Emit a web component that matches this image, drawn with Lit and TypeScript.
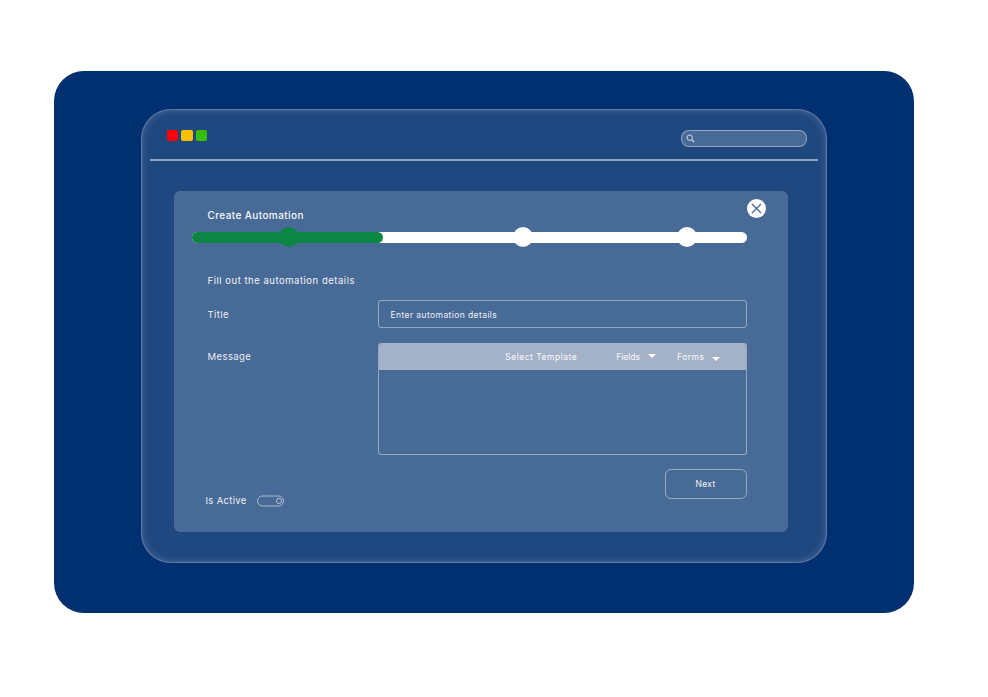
import { LitElement, html, css } from "lit";
import { customElement } from "lit/decorators.js";

@customElement("app-root")
export class AppRoot extends LitElement {
  static styles = css`
    :host {
      display: block;
      height: 697px;
      background: #fff;
      font-family: Inter, "Open Sans", sans-serif;
      color: #e9eef5;
      box-sizing: border-box;
      padding: 71px 0 0 54px;
    }
    * { box-sizing: border-box; }
    .stage {
      width: 860px;
      height: 542px;
      background: #003070;
      border-radius: 30px;
      padding: 38px 87px 0;
    }
    .window {
      width: 686px;
      height: 454px;
      background: #204880;
      border-radius: 30px;
      border: 1.5px solid rgba(255, 255, 255, 0.28);
      box-shadow: inset 0 0 7px rgba(255, 255, 255, 0.2);
      padding: 19px 8.5px 0 7.5px;
    }
    .topbar {
      display: flex;
      justify-content: space-between;
      height: 30px;
      padding: 0 11px 0 17px;
    }
    .lights { display: flex; gap: 3px; margin-top: 0.5px; }
    .light { width: 11.5px; height: 11.5px; border-radius: 2px; }
    .red { background: #ff0000; }
    .yellow { background: #ffc000; }
    .green { background: #38c000; }
    .search {
      width: 126px;
      height: 16.5px;
      margin-top: 1px;
      border-radius: 8px;
      background: #486a97;
      border: 1px solid rgba(255, 255, 255, 0.4);
      display: flex;
      align-items: center;
      padding-left: 4px;
    }
    .search svg { display: block; }
    .divider {
      height: 2px;
      background: #93a6c2;
      margin-top: -0.5px;
    }
    .panel {
      position: relative;
      width: 614px;
      height: 341px;
      margin: 30px 0 0 24px;
      background: #486a97;
      border-radius: 6px;
      padding: 17px 41px 0 18px;
    }
    .close {
      position: absolute;
      top: 8px;
      right: 22px;
      width: 19px;
      height: 19px;
    }
    .close svg { display: block; }
    h1 {
      margin: 0 0 0 16px;
      font-size: 10px;
      line-height: 14px;
      font-weight: 500;
      letter-spacing: 0.4px;
      color: #f6f8fb;
    }
    .track {
      position: relative;
      height: 10.5px;
      margin-top: 10.5px;
      background: #fff;
      border-radius: 6px;
    }
    .fill {
      height: 100%;
      width: 191px;
      background: #0d8645;
      border-radius: 6px;
    }
    .knob {
      position: absolute;
      top: -4.75px;
      width: 20px;
      height: 20px;
      margin-left: -10px;
      border-radius: 50%;
      background: #fff;
    }
    .knob.on { background: #0d8645; }
    .form {
      display: grid;
      grid-template-columns: 170px 369px;
      padding-left: 16px;
      row-gap: 15px;
      margin-top: 12px;
    }
    .intro {
      margin: 31px 0 0 16px;
      font-size: 9.5px;
      line-height: 14px;
      letter-spacing: 0.52px;
      color: #f0f3f8;
    }
    .label {
      font-size: 9.5px;
      line-height: 14px;
      letter-spacing: 0.42px;
      color: #e8edf4;
      align-self: center;
      padding-top: 2px;
    }
    .label.top { align-self: start; margin-top: 5px; }
    .input {
      height: 28px;
      border: 1px solid rgba(255, 255, 255, 0.42);
      border-radius: 3px;
      display: flex;
      align-items: center;
      padding: 2px 0 0 12px;
      font-size: 8.5px;
      letter-spacing: 0.41px;
      color: #eef1f6;
    }
    .editor {
      height: 112px;
      border: 1px solid rgba(255, 255, 255, 0.42);
      border-top: 0;
      border-radius: 3px;
      overflow: hidden;
    }
    .toolbar {
      height: 27px;
      background: #a4b2c8;
      display: flex;
      align-items: center;
      justify-content: flex-end;
      padding: 2px 26px 0 0;
      font-size: 8.5px;
      letter-spacing: 0.48px;
      color: #f6f8fb;
    }
    .tpl { margin-right: 39px; letter-spacing: 0.51px; }
    .fields-label { letter-spacing: 0; }
    .caret {
      width: 0;
      height: 0;
      border-left: 4.5px solid transparent;
      border-right: 4.5px solid transparent;
      border-top: 4.5px solid #fff;
      margin: 0 0 2px 8px;
    }
    .caret.fields { margin-right: 21px; }
    .caret.forms { margin: 4px 0 0 7px; }
    .footer {
      display: flex;
      justify-content: space-between;
      align-items: flex-start;
      margin-top: 14px;
      padding-left: 14px;
    }
    .active {
      display: flex;
      align-items: center;
      gap: 10px;
      margin-top: 25px;
      font-size: 9.5px;
      line-height: 14px;
      letter-spacing: 0.3px;
      color: #eef1f6;
    }
    .active svg { display: block; }
    .next {
      width: 82px;
      height: 30px;
      border: 1px solid rgba(255, 255, 255, 0.42);
      border-radius: 6px;
      background: transparent;
      color: #f3f5f9;
      font: inherit;
      font-size: 8.5px;
      letter-spacing: 0.35px;
      padding: 1px 0 0;
    }
  `;

  render() {
    return html`
      <div class="stage">
        <div class="window">
          <div class="topbar">
            <div class="lights">
              <div class="light red"></div>
              <div class="light yellow"></div>
              <div class="light green"></div>
            </div>
            <div class="search">
              <svg width="9" height="9" viewBox="0 0 9 9" fill="none" stroke="#dfe6ef" stroke-width="0.9">
                <circle cx="3.7" cy="3.7" r="2.7"></circle>
                <path d="M5.8 5.8 8.2 8.2" stroke-width="1.2"></path>
              </svg>
            </div>
          </div>
          <div class="divider"></div>
          <div class="panel">
            <div class="close">
              <svg width="19" height="19" viewBox="0 0 19 19">
                <circle cx="9.5" cy="9.5" r="9.5" fill="#fff"></circle>
                <path d="M5 5 14 14M14 5 5 14" stroke="#486a97" stroke-width="1.4" fill="none"></path>
              </svg>
            </div>
            <h1>Create Automation</h1>
            <div class="track">
              <div class="fill"></div>
              <div class="knob on" style="left:97px"></div>
              <div class="knob" style="left:331px"></div>
              <div class="knob" style="left:495px"></div>
            </div>
            <div class="intro">Fill out the automation details</div>
            <div class="form">
              <div class="label">Title</div>
              <div class="input">Enter automation details</div>
              <div class="label top">Message</div>
              <div class="editor">
                <div class="toolbar">
                  <span class="tpl">Select Template</span>
                  <span class="fields-label">Fields</span><span class="caret fields"></span>
                  <span>Forms</span><span class="caret forms"></span>
                </div>
              </div>
            </div>
            <div class="footer">
              <div class="active">
                <span>Is Active</span>
                <svg width="27" height="12" viewBox="0 0 27 12" fill="none" stroke="#c3cede" stroke-width="0.8">
                  <rect x="0.5" y="1" width="26" height="10" rx="5"></rect>
                  <circle cx="22" cy="6" r="2.6"></circle>
                </svg>
              </div>
              <button class="next">Next</button>
            </div>
          </div>
        </div>
      </div>
    `;
  }
}
